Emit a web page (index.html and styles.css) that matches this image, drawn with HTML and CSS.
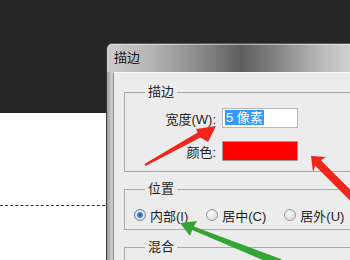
FILE: index.html
```html
<!DOCTYPE html>
<html>
	<head>
		<meta charset="UTF-8">
		<title>描边</title>
		<link rel="stylesheet" href="styles.css">
	</head>
	<body>
		<div class="desk">
			<div class="guide"></div>

			<div class="dialog">
				<div class="titlebar">描边</div>
				<div class="frame">
					<div class="panel">
						<fieldset class="group">
							<legend>描边</legend>
							<div class="form">
								<label>宽度(W):</label>
								<div class="input"><span class="sel">5 像素</span></div>
								<label>颜色:</label>
								<div class="swatch"></div>
							</div>
						</fieldset>

						<fieldset class="group">
							<legend>位置</legend>
							<div class="radios">
								<span class="radio"><i class="dot on"></i>内部(I)</span>
								<span class="radio"><i class="dot"></i>居中(C)</span>
								<span class="radio"><i class="dot"></i>居外(U)</span>
							</div>
						</fieldset>

						<fieldset class="group">
							<legend>混合</legend>
							<div class="radios"></div>
						</fieldset>
					</div>
				</div>
			</div>

			<svg class="marks" width="350" height="260" viewBox="0 0 350 260">
				<polygon fill="#f0261c" points="144.5,164.1 197.6,132.4 196,129 216,126 208,142 200.4,137.6 145.5,165.9"/>
				<polygon fill="#f0261c" points="311,156 326,157 320.8,160.2 358.8,198.2 353.2,203.8 315.2,165.8 313,172"/>
				<polygon fill="#33a533" points="180,223 197,221 193.8,226.6 281.5,259.3 278.5,266.7 192.2,229.9 190,236"/>
			</svg>
		</div>
	</body>
</html>
```

FILE: styles.css
```css
html, body{
	margin: 0;
	padding: 0;
}
body{
	width: 350px;
	height: 260px;
	overflow: hidden;
	font-family: "Liberation Sans", "Noto Sans CJK SC", sans-serif;
	font-size: 13px;
	color: #1e1e1e;
	background: linear-gradient(#262626 0, #262626 113px, #fff 113px);
}
.desk{
	position: relative;
	width: 350px;
	height: 260px;
	overflow: hidden;
}
/* 画布上的参考虚线 */
.guide{
	position: absolute;
	left: 0;
	top: 205px;
	width: 105px;
	border-top: 1px dashed #333;
}
/* 对话框窗口，右侧和底部被画面截断 */
.dialog{
	position: absolute;
	left: 106px;
	top: 43px;
	width: 243px;
	height: 216px;
	border-left: 1px solid #3c3c3c;
	border-top: 1px solid #5a5a5a;
	border-top-left-radius: 6px;
	overflow: hidden;
	display: flex;
	flex-direction: column;
}
.titlebar{
	height: 28px;
	line-height: 28px;
	padding-left: 7px;
	color: #1a1a1a;
	background: linear-gradient(to right, #cdcdcd 0, #b4b4b4 18%, #858585 40%, #5e5e5e 55%, #7e7e7e 68%, #b9b9b9 88%, #d0d0d0 100%);
	box-shadow: inset 0 1px 0 rgba(255,255,255,0.45);
}
.frame{
	flex: 1;
	display: flex;
	padding-left: 6px;
	background: linear-gradient(to right, #9a9a9a, #c9c9c9 4px, #b7b7b7);
}
.panel{
	flex: 1;
	overflow: hidden;
	background: #ececec;
	border-left: 1px solid #8d8d8d;
	border-top: 1px solid #f8f8f8;
	padding: 11px 0 0 10px;
}
.group{
	margin: 0 0 9px 0;
	padding: 0;
	border: 1px solid #a9a9a9;
	border-right: none;
}
.group legend{
	margin-left: 20px;
	padding: 0 3px;
	line-height: 16px;
}
.form{
	display: grid;
	grid-template-columns: 91px 76px;
	column-gap: 6px;
	row-gap: 13px;
	align-items: center;
	padding: 8px 0 10px 0;
}
.form label{
	text-align: right;
}
.input{
	height: 18px;
	border: 1px solid #b5b8be;
	background: #fff;
	line-height: 18px;
	padding-left: 2px;
}
.sel{
	background: #3399ff;
	color: #fff;
	padding: 0 1px;
}
.swatch{
	height: 18px;
	border: 1px solid #9c9c9c;
	background: #ff0000;
}
.radios{
	display: flex;
	gap: 18px;
	height: 16px;
	align-items: center;
	padding: 10px 0 6px 9px;
}
.radio{
	display: flex;
	align-items: center;
	gap: 4px;
	white-space: nowrap;
}
.dot{
	width: 10px;
	height: 10px;
	border-radius: 50%;
	border: 1px solid #979797;
	background: radial-gradient(circle at 40% 35%, #fafafa, #d2d2d2);
}
.dot.on{
	border-color: #6f7f95;
	background: radial-gradient(circle, #1d5fa8 0, #3f8ad6 2.5px, #e4e8ee 3.5px, #c9ced6 100%);
}
.marks{
	position: absolute;
	left: 0;
	top: 0;
}
```
